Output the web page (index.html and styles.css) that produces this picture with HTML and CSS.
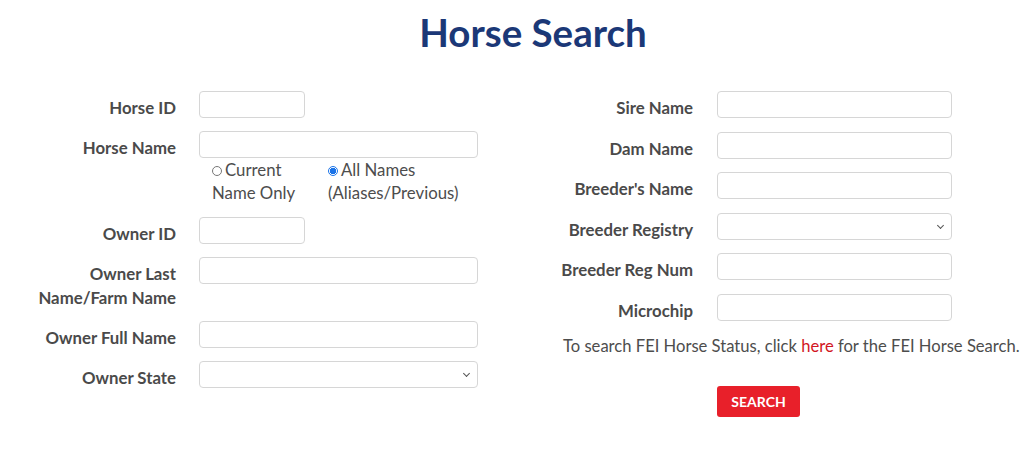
FILE: index.html
```html
<!DOCTYPE html>
<html lang="en">
<head>
<meta charset="utf-8">
<title>Horse Search</title>
<link rel="stylesheet" href="styles.css">
</head>
<body>
<h1 class="title">Horse Search</h1>
<form class="form">
  <div class="col col-left">
    <div class="row">
      <label class="lbl">Horse ID</label>
      <div class="field"><input class="input input-sm" type="text"></div>
    </div>
    <div class="row">
      <label class="lbl">Horse Name</label>
      <div class="field">
        <input class="input" type="text">
        <div class="radios">
          <label class="radio"><input type="radio" name="nm" class="rb">Current Name Only</label>
          <label class="radio"><input type="radio" name="nm" class="rb" checked>All Names (Aliases/Previous)</label>
        </div>
      </div>
    </div>
    <div class="row">
      <label class="lbl">Owner ID</label>
      <div class="field"><input class="input input-sm" type="text"></div>
    </div>
    <div class="row">
      <label class="lbl">Owner Last Name/Farm Name</label>
      <div class="field"><input class="input" type="text"></div>
    </div>
    <div class="row">
      <label class="lbl">Owner Full Name</label>
      <div class="field"><input class="input" type="text"></div>
    </div>
    <div class="row">
      <label class="lbl">Owner State</label>
      <div class="field select-wrap"><select class="input select"><option></option></select></div>
    </div>
  </div>
  <div class="col col-right">
    <div class="row">
      <label class="lbl">Sire Name</label>
      <div class="field"><input class="input" type="text"></div>
    </div>
    <div class="row">
      <label class="lbl">Dam Name</label>
      <div class="field"><input class="input" type="text"></div>
    </div>
    <div class="row">
      <label class="lbl">Breeder's Name</label>
      <div class="field"><input class="input" type="text"></div>
    </div>
    <div class="row">
      <label class="lbl">Breeder Registry</label>
      <div class="field select-wrap"><select class="input select"><option></option></select></div>
    </div>
    <div class="row">
      <label class="lbl">Breeder Reg Num</label>
      <div class="field"><input class="input" type="text"></div>
    </div>
    <div class="row">
      <label class="lbl">Microchip</label>
      <div class="field"><input class="input" type="text"></div>
    </div>
    <p class="note">To search FEI Horse Status, click <a class="link" href="#">here</a> for the FEI Horse Search.</p>
    <button type="button" class="btn">SEARCH</button>
  </div>
</form>
</body>
</html>
```

FILE: styles.css
```css
html, body {
  margin: 0;
  padding: 0;
  background: #ffffff;
}

body {
  font-family: Lato, "Open Sans", "Liberation Sans", sans-serif;
  font-size: 16.8px;
  color: #4d4d4d;
}

.title {
  margin: 9px 0 0 0;
  padding-left: 42px;
  text-align: center;
  font-size: 38.5px;
  line-height: 46px;
  font-weight: 700;
  color: #1b3877;
}

.form {
  display: grid;
  grid-template-columns: 512px 512px;
  margin: 36px 0 0 0;
}

.col-left .row {
  grid-template-columns: 176px 279px;
  column-gap: 23px;
  margin-bottom: 13px;
}

.col-left .lbl {
  padding-left: 26px;
}

.col-right .row {
  grid-template-columns: 181px 235px;
  column-gap: 24px;
}

.row {
  display: grid;
  align-items: start;
  margin-bottom: 13.6px;
}

.lbl {
  text-align: right;
  font-weight: 700;
  font-size: 16.8px;
  line-height: 24px;
  padding-top: 5px;
  margin-bottom: -2px;
  color: #4a4a4a;
}

.input {
  display: block;
  box-sizing: border-box;
  width: 100%;
  height: 27px;
  margin: 0;
  border: 1px solid #d6d6d6;
  border-radius: 4px;
  background: #fff;
  font-family: inherit;
  font-size: 14px;
  padding: 0 8px;
}

.input-sm {
  width: 106px;
}

.select-wrap {
  position: relative;
}

.select {
  appearance: none;
  -webkit-appearance: none;
}

.select-wrap::after {
  content: "";
  position: absolute;
  right: 9px;
  top: 10px;
  width: 4px;
  height: 4px;
  border-right: 1px solid #555;
  border-bottom: 1px solid #555;
  transform: rotate(45deg);
  pointer-events: none;
}

.radios {
  display: grid;
  grid-template-columns: 116px 1fr;
  padding-left: 13px;
  line-height: 23px;
  font-size: 16.8px;
  color: #4d4d4d;
}

.radio {
  display: block;
  padding-right: 6px;
}

.rb {
  appearance: none;
  -webkit-appearance: none;
  box-sizing: border-box;
  width: 10px;
  height: 10px;
  margin: 0 3px 0 0;
  border: 1px solid #777;
  border-radius: 50%;
  vertical-align: 0px;
  background: #fff;
}

.rb:checked {
  border-color: #1a73e8;
  background: radial-gradient(circle, #1a73e8 0 3px, #fff 3.2px);
}

.note {
  margin: 0;
  padding-left: 51px;
  white-space: nowrap;
  font-size: 16.6px;
  line-height: 23px;
  color: #4d4d4d;
}

.link {
  color: #d2151f;
  text-decoration: none;
}

.btn {
  display: block;
  margin: 28px 0 0 205px;
  width: 83px;
  height: 31px;
  border: none;
  border-radius: 3px;
  background: #e8202a;
  color: #fff;
  font-family: inherit;
  font-weight: 700;
  font-size: 14px;
  padding: 0;
}
```
